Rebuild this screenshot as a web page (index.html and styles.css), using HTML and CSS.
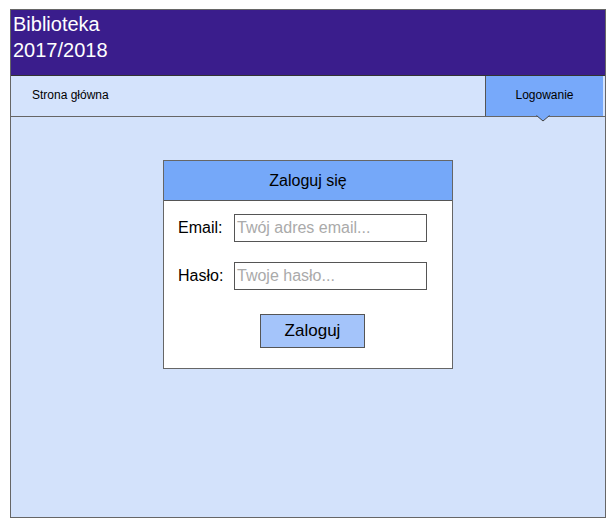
FILE: index.html
```html
<!DOCTYPE html>
<html lang="pl">
<head>
<meta charset="utf-8">
<link rel="stylesheet" href="styles.css">
</head>
<body>
<div class="frame">
  <header class="top">
    <div class="title">Biblioteka<br>2017/2018</div>
  </header>
  <nav class="nav">
    <div class="nav-item">Strona główna</div>
    <div class="nav-tab">Logowanie<svg class="arrow" width="14" height="7" viewBox="0 0 14 7"><polygon points="0,0 7,6 14,0" fill="#77a9fa"/><polyline points="0.5,0.5 7,6 13.5,0.5" fill="none" stroke="#444" stroke-width="1"/></svg></div>
  </nav>
  <main class="content">
    <div class="login">
      <div class="login-head">Zaloguj się</div>
      <div class="login-body">
        <div class="row"><span class="label">Email:</span><div class="input">Twój adres email...</div></div>
        <div class="row"><span class="label">Hasło:</span><div class="input">Twoje hasło...</div></div>
        <div class="btn-row"><div class="btn">Zaloguj</div></div>
      </div>
    </div>
  </main>
</div>
</body>
</html>
```
FILE: styles.css
```css
html, body { margin: 0; padding: 0; background: #fff; }
body { font-family: "Liberation Sans", Arial, sans-serif; }
.frame {
  margin: 9px 0 0 10px;
  width: 596px;
  height: 509px;
  box-sizing: border-box;
  border: 1px solid #666;
  display: flex;
  flex-direction: column;
  background: #d3e2fb;
}
.top {
  background: #3a1d8c;
  height: 66px;
  box-sizing: border-box;
  padding: 1px 0 0 2px;
  border-bottom: 1px solid #333;
}
.title { color: #fff; font-size: 20px; line-height: 26px; }
.nav {
  height: 41px;
  box-sizing: border-box;
  border-bottom: 1px solid #666;
  display: flex;
  justify-content: space-between;
  background: #d4e3fc;
}
.nav-item { font-size: 12px; padding: 12px 0 0 21px; color: #000; }
.nav-tab {
  position: relative;
  width: 118px;
  box-sizing: border-box;
  background: #77a9fa;
  border-left: 1px solid #555;
  font-size: 12px;
  text-align: center;
  padding-top: 12px;
  margin-right: 2px;
}
.arrow {
  position: absolute;
  left: 50px;
  bottom: -6px;
  display: block;
}
.content { flex: 1; padding: 43px 0 0 152px; }
.login {
  width: 290px;
  box-sizing: border-box;
  border: 1px solid #666;
  background: #fff;
}
.login-head {
  background: #75a8f9;
  height: 40px;
  box-sizing: border-box;
  border-bottom: 1px solid #555;
  text-align: center;
  font-size: 16px;
  line-height: 39px;
}
.login-body { padding: 13px 0 20px 14px; }
.row { display: flex; align-items: center; margin-bottom: 20px; }
.label { width: 56px; font-size: 16px; }
.input {
  width: 193px;
  height: 28px;
  box-sizing: border-box;
  border: 1px solid #555;
  color: #aaa;
  font-size: 16px;
  line-height: 26px;
  padding-left: 2px;
}
.btn-row { display: flex; padding-left: 82px; padding-top: 4px; }
.btn {
  width: 105px;
  height: 34px;
  box-sizing: border-box;
  border: 1px solid #555;
  background: #a4c4fa;
  text-align: center;
  font-size: 17px;
  line-height: 32px;
}
```
